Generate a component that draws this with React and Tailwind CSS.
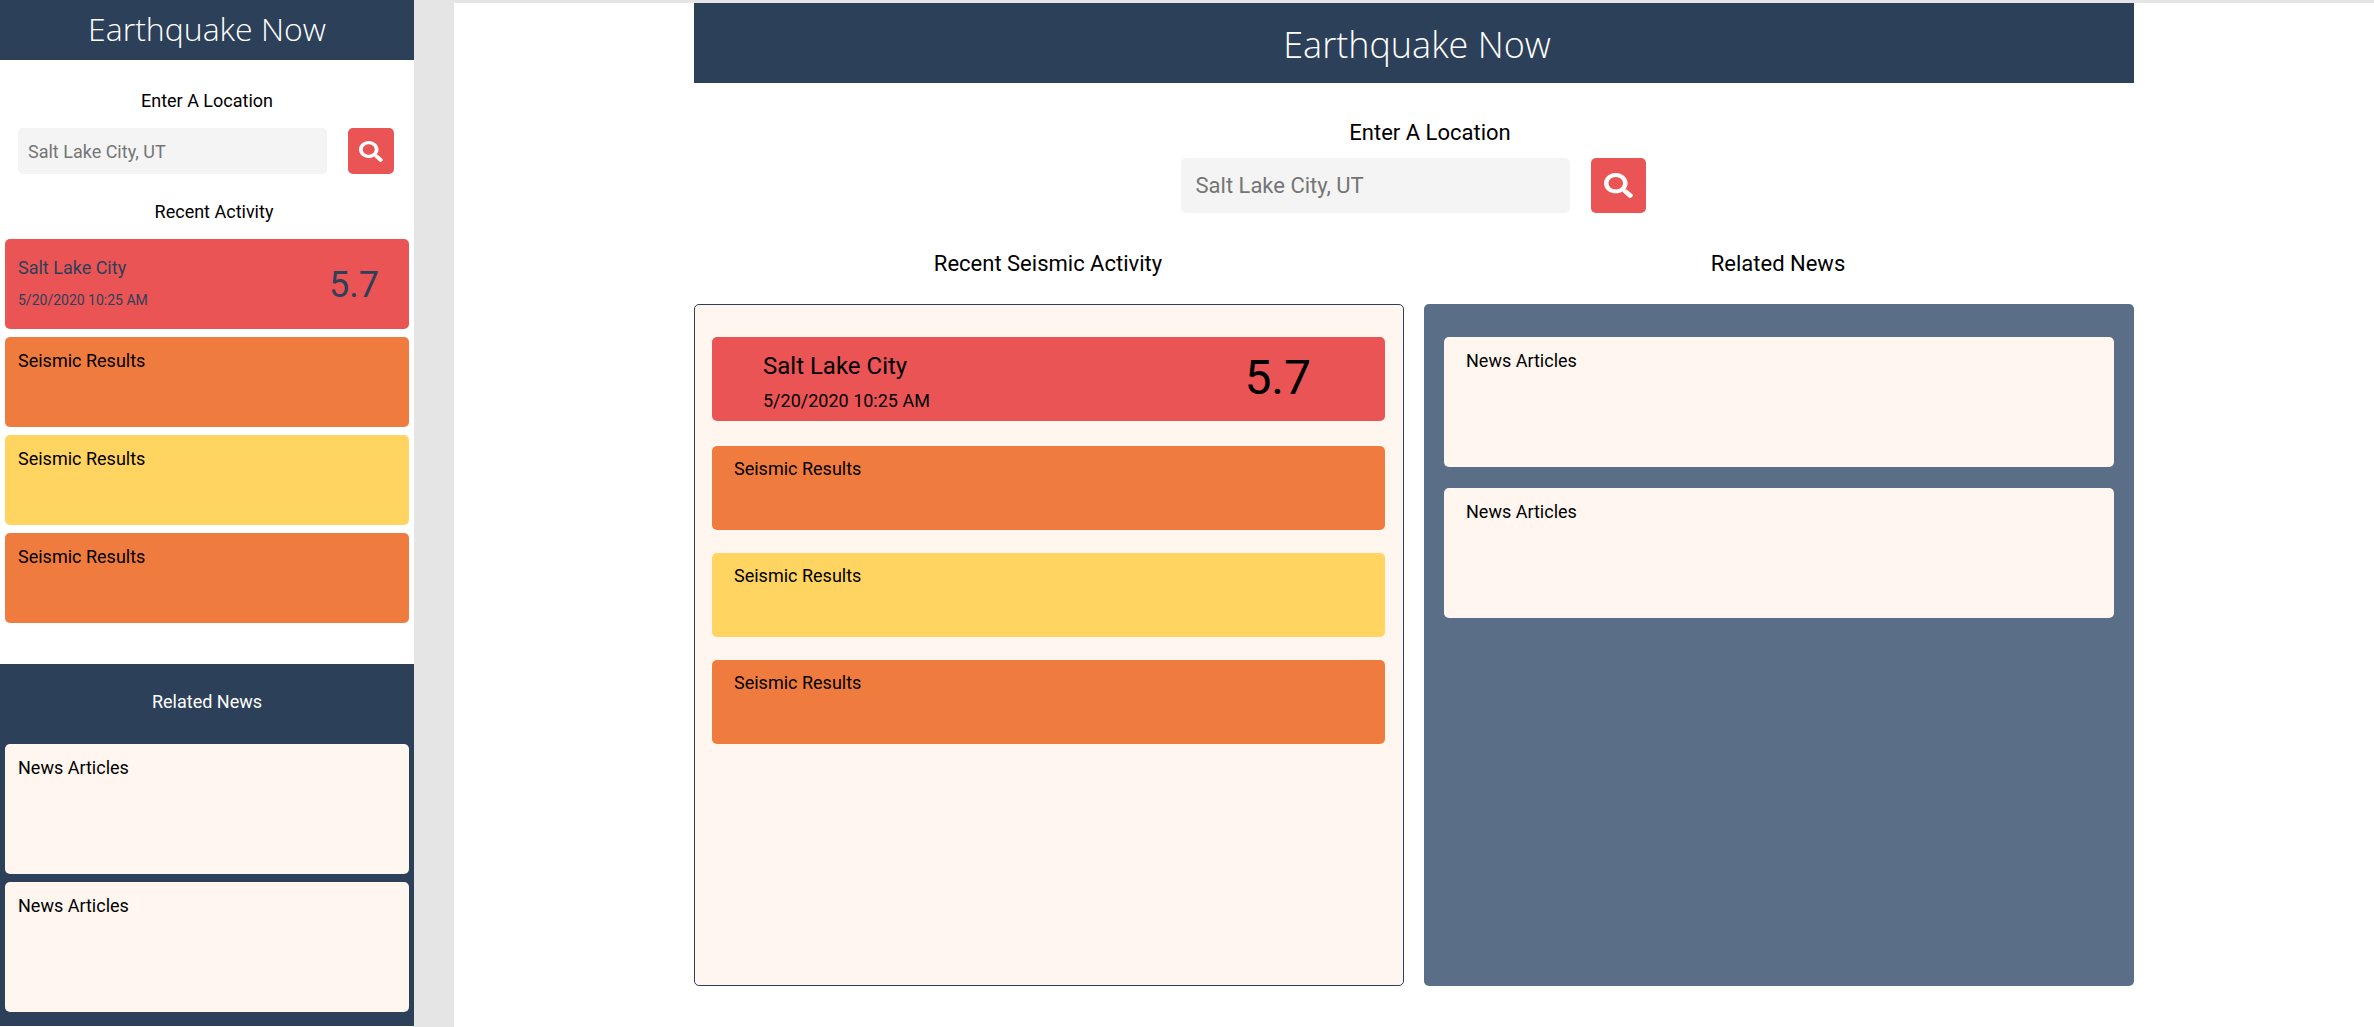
import { FaSearch } from "react-icons/fa";

const quakes = [
  { fill: "bg-[#f07b3f]" },
  { fill: "bg-[#ffd460]" },
  { fill: "bg-[#f07b3f]" },
];
const articles = ["first", "second"];

function PhoneLayout() {
  return (
    <section className="flex w-[414px] shrink-0 flex-col bg-white">
      <header className="h-[60px] bg-[#2d4059] text-center text-white">
        <h1 className="font-['Open_Sans',sans-serif] text-[32px] leading-[58px] font-light">Earthquake Now</h1>
      </header>
      <form className="px-[18px] pt-[30px]" onSubmit={(e) => e.preventDefault()}>
        <label htmlFor="phone-location" className="block text-center text-lg leading-[22px]">
          Enter A Location
        </label>
        <div className="mt-4 flex gap-[21px] pr-0.5">
          <input
            id="phone-location"
            type="text"
            placeholder="Salt Lake City, UT"
            className="h-[46px] min-w-0 flex-1 rounded-[5px] bg-[#f4f4f4] px-2.5 text-lg placeholder:text-[#757575] placeholder:opacity-100"
          />
          <button type="submit" aria-label="Search" className="flex size-[46px] items-center justify-center rounded-[5px] bg-[#ea5455] text-white">
            <FaSearch preserveAspectRatio="none" className="h-[21px] w-6" />
          </button>
        </div>
      </form>
      <h2 className="mt-[27px] pl-3.5 text-center text-lg leading-[22px]">Recent Activity</h2>
      <ul className="mt-4 flex flex-col gap-2 px-[5px]">
        <li className="flex h-[90px] items-center justify-between rounded-[5px] bg-[#ea5455] pr-[30px] pl-[13px] text-[#2d4059]">
          <div className="pb-1">
            <p className="text-lg leading-7">Salt Lake City</p>
            <p className="mt-2 text-sm leading-5">5/20/2020 10:25 AM</p>
          </div>
          <p className="pt-0.5 text-4xl">5.7</p>
        </li>
        {quakes.map((q, i) => (
          <li key={i} className={`h-[90px] rounded-[5px] px-[13px] pt-3 text-lg leading-6 ${q.fill}`}>
            Seismic Results
          </li>
        ))}
      </ul>
      <div className="mt-[41px] bg-[#2d4059] px-[5px] pb-3.5">
        <h2 className="pt-[27px] text-center text-lg leading-[22px] text-white">Related News</h2>
        <ul className="mt-[31px] flex flex-col gap-2">
          {articles.map((a) => (
            <li key={a} className="h-[130px] rounded-[5px] bg-[#fff6f0] px-[13px] pt-3 text-lg leading-6">
              News Articles
            </li>
          ))}
        </ul>
      </div>
    </section>
  );
}

function DesktopLayout() {
  return (
    <section className="mt-[3px] min-w-0 flex-1 bg-white">
      <div className="mx-auto max-w-[1440px]">
        <header className="h-20 bg-[#2d4059] pl-1.5 text-center text-white">
          <h1 className="font-['Open_Sans',sans-serif] text-4xl leading-[84px] font-light">Earthquake Now</h1>
        </header>
        <form className="pt-9" onSubmit={(e) => e.preventDefault()}>
          <label htmlFor="desktop-location" className="block pl-8 text-center text-[22px] leading-7">
            Enter A Location
          </label>
          <div className="mt-[11px] flex justify-center gap-[21px] pr-0.5">
            <input
              id="desktop-location"
              type="text"
              placeholder="Salt Lake City, UT"
              className="h-[55px] w-[389px] rounded-[5px] bg-[#f4f4f4] px-[15px] text-[22px] placeholder:text-[#757575] placeholder:opacity-100"
            />
            <button type="submit" aria-label="Search" className="flex size-[55px] items-center justify-center rounded-[5px] bg-[#ea5455] text-white">
              <FaSearch preserveAspectRatio="none" className="h-[25px] w-[29px]" />
            </button>
          </div>
        </form>
        <div className="mt-[37px] grid grid-cols-2 gap-5">
          <section className="flex flex-col">
            <h2 className="pr-0.5 text-center text-[22px] leading-7">Recent Seismic Activity</h2>
            <ul className="mt-[26px] flex min-h-[682px] flex-col gap-[23px] rounded-[5px] border border-[#2d4059] bg-[#fff6f0] pt-8 pr-[18px] pl-[17px]">
              <li className="mb-0.5 flex h-[84px] items-center justify-between rounded-[5px] bg-[#ea5455] pr-[74px] pl-[51px]">
                <div className="pt-[7px]">
                  <p className="text-2xl leading-8">Salt Lake City</p>
                  <p className="mt-[5px] text-lg leading-7">5/20/2020 10:25 AM</p>
                </div>
                <p className="pb-0.5 text-5xl">5.7</p>
              </li>
              {quakes.map((q, i) => (
                <li key={i} className={`h-[84px] rounded-[5px] px-[22px] pt-[11px] text-lg leading-6 ${q.fill}`}>
                  Seismic Results
                </li>
              ))}
            </ul>
          </section>
          <section className="flex flex-col">
            <h2 className="pr-0.5 text-center text-[22px] leading-7">Related News</h2>
            <ul className="mt-[26px] flex min-h-[682px] flex-col gap-[21px] rounded-[5px] bg-[#5b6e87] px-5 pt-[33px]">
              {articles.map((a) => (
                <li key={a} className="h-[130px] rounded-[5px] bg-[#fff6f0] px-[22px] pt-3 text-lg leading-6">
                  News Articles
                </li>
              ))}
            </ul>
          </section>
        </div>
      </div>
    </section>
  );
}

export default function App() {
  return (
    <main className="flex min-h-screen gap-10 bg-[#e5e5e5] font-[Roboto,sans-serif] text-black">
      <PhoneLayout />
      <DesktopLayout />
    </main>
  );
}
